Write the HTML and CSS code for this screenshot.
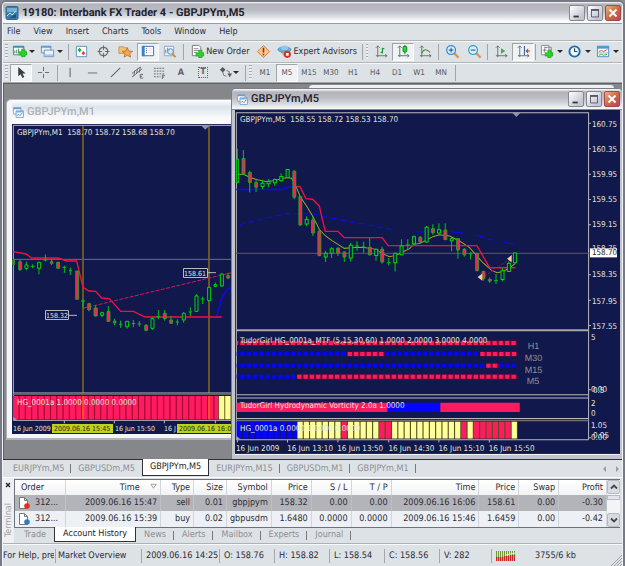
FILE: index.html
```html
<!DOCTYPE html>
<html lang="en">
<head>
<meta charset="utf-8">
<title>19180: Interbank FX Trader 4 - GBPJPYm,M5</title>
<link rel="stylesheet" href="styles.css">
</head>
<body>
<svg class="defs" aria-hidden="true">
  <symbol id="windows" viewBox="0 0 16 16"><path d="M2 2h9v8H2z" fill="#fff" stroke="#7f9cc4"/><path d="M2 2h9v2H2z" fill="#6f9bd0"/><path d="M5 6h9v8H5z" fill="#fff" stroke="#6a96c6"/><path d="M5 6h9v2H5z" fill="#79b1dd"/><path d="M6 12l2-2 2 2 2-3 1 1" fill="none" stroke="#4f86bd"/></symbol>
  <symbol id="min" viewBox="0 0 16 16"><path d="M4 11h6v2H4z" fill="#33333d"/></symbol>
  <symbol id="max" viewBox="0 0 16 16"><path d="M4 4.500h8v8H4z" fill="none" stroke="#55555f"/><path d="M3.500 3.500h9v2h-9z" fill="#55555f"/></symbol>
  <symbol id="close" viewBox="0 0 16 16"><path d="M4 4l8 8M12 4l-8 8" stroke="#fff" stroke-width="2.200" fill="none"/></symbol>
  <symbol id="plus" viewBox="0 0 8 8"><path d="M3 0h3v3h2v3H6v2H3V6H0V3h3z" fill="#2fd02a" stroke="#159a18" stroke-width=".6"/></symbol>
  <symbol id="axes" viewBox="0 0 16 16"><path d="M4 2v12M2 4l2-2 2 2M2 12.500h12M12 11l2 1.500-2 1.500" fill="none" stroke="#6c6f6a"/></symbol>
</svg>
<div class="app">
  <header class="title-bar">
    <svg class="icon" viewBox="0 0 16 16"><rect x="1" y="1.500" width="12" height="13" rx="1.500" fill="#3b7dad" stroke="#33648f"/><path d="M2 3h10v4H2z" fill="#6fb2d4"/><path d="M2 11l3-3 2 2 4-4" fill="none" stroke="#c5e3f2"/><path d="M4 13h7V9z" fill="#1c5385"/></svg>
    <h1 class="title">19180: Interbank FX Trader 4 - GBPJPYm,M5</h1>
    <div class="controls">
      <button class="control" aria-label="Minimize"><svg><use href="#min"/></svg></button>
      <button class="control" aria-label="Maximize"><svg><use href="#max"/></svg></button>
      <button class="control control-close" aria-label="Close"><svg><use href="#close"/></svg></button>
    </div>
  </header>

  <nav class="menu">
    <button>File</button><button>View</button><button>Insert</button><button>Charts</button><button>Tools</button><button>Window</button><button>Help</button>
  </nav>

  <div class="toolbar">
    <span class="grip"></span>
    <button class="tool drop" aria-label="New chart"><svg class="icon" viewBox="0 0 16 16"><path d="M1.500 2.500h11v9h-11z" fill="#f4fafc" stroke="#4b8a9c"/><path d="M1 2h12v2H1z" fill="#3f8fb0"/><path d="M3 10V7m2 3V6m2 4V5" stroke="#3d9c57"/><use href="#plus" x="7" y="5" width="9" height="9"/></svg></button>
    <button class="tool drop" aria-label="Profiles"><svg class="icon" viewBox="0 0 16 16"><path d="M1.500 2.500h10v7h-10z" fill="#e6f0f8" stroke="#5f8fc3"/><path d="M1 2h11v2H1z" fill="#5d9bd6"/><path d="M4.500 6.500h10v7h-10z" fill="#eef4fa" stroke="#6a91c2"/><path d="M5 11h9v2H5z" fill="#a9c6e2"/></svg></button>
    <span class="sep"></span>
    <button class="tool" aria-label="Market watch"><svg class="icon" viewBox="0 0 16 16"><path d="M2.500 2.500h11v11h-11z" fill="#fff" stroke="#5793bd"/><path d="M6 4l2 2.500L6 9 4 6.500z" fill="#1fa83a"/><path d="M10 7.500l2 2.300-2 2.200-2-2.200z" fill="#e0402f"/></svg></button>
    <button class="tool" aria-label="Data window"><svg class="icon" viewBox="0 0 16 16" fill="none" stroke="#666a70"><circle cx="8" cy="8" r="4.500" stroke-width="1.400"/><path d="M8 1.500v5M8 9.500v5M1.500 8h5M9.500 8h5"/></svg></button>
    <button class="tool" aria-label="Navigator"><svg class="icon" viewBox="0 0 16 16"><path d="M1 3h5l1 1h3v6H1z" fill="#f2c36f" stroke="#c1853c" stroke-width=".8"/><path d="M10 4l1.500 3.500 4 .3-3 2.400 1 3.800L10 12l-3.500 2 1-3.800-3-2.400 4-.3z" fill="#f4a650" stroke="#b9652b" stroke-width=".8"/></svg></button>
    <button class="tool pressed" aria-label="Terminal"><svg class="icon" viewBox="0 0 16 16"><path d="M2.500 2.500h12v10h-12z" fill="#fdfeff" stroke="#3d6ea8"/><path d="M2 2h3v11H2z" fill="#3a83ca"/><path d="M6.500 5h1M6.500 7h1M6.500 9h1" stroke="#556"/><path d="M9 5h4M9 7h4M9 9h4" stroke="#dfe8f2"/></svg></button>
    <button class="tool" aria-label="Strategy tester"><svg class="icon" viewBox="0 0 16 16"><path d="M2.500 2.500h10v10h-10z" fill="#eef4fa" stroke="#8ba7c8"/><path d="M4 10V6m2 3V4m2 4V5" stroke="#5d8e9b"/><circle cx="9" cy="8" r="3" fill="#cfe8f8" fill-opacity=".8" stroke="#5f87b0"/><path d="M11 10.500l3.500 3.500" stroke="#d88a35" stroke-width="2"/></svg></button>
    <span class="sep sep-wide"></span>
    <button class="tool labelled"><svg class="icon" viewBox="0 0 16 16"><path d="M2.500 1.500h7l2 2v9h-9z" fill="#fff" stroke="#777"/><path d="M4 5h5M4 7h6M4 9h3" stroke="#888"/><use href="#plus" x="6" y="6" width="9" height="9"/></svg>New Order</button>
    <button class="tool" aria-label="MetaEditor"><svg class="icon" viewBox="0 0 16 16"><path d="M8 1.500L14.500 8 8 14.500 1.500 8z" fill="#f6c48f" stroke="#cf7f3c"/><path d="M8 4v5M8 10.500v1.500" stroke="#8b2c14" stroke-width="1.600"/></svg></button>
    <button class="tool labelled"><svg class="icon" viewBox="0 0 16 16"><path d="M3 7l5 6 5-6z" fill="#f0c07c" stroke="#c08b4a" stroke-width=".7"/><ellipse cx="8" cy="6" rx="7" ry="3" fill="#63b0df" stroke="#3d83b5" stroke-width=".7"/><ellipse cx="8" cy="4" rx="4" ry="2.500" fill="#8bcaec"/><circle cx="11" cy="11" r="3.800" fill="#d92c1d"/><path d="M9.500 9.500h3v3h-3z" fill="#fff"/></svg>Expert Advisors</button>
    <span class="sep"></span><span class="grip"></span>
    <button class="tool" aria-label="Bar chart"><svg class="icon" viewBox="0 0 16 16"><use href="#axes"/><path d="M9 4v6M7 9h2M9 5h2" stroke="#18a02c" stroke-width="1.300"/></svg></button>
    <button class="tool pressed" aria-label="Candlesticks"><svg class="icon" viewBox="0 0 16 16"><use href="#axes"/><path d="M9.500 1v10" stroke="#11801d"/><rect x="7.500" y="2.500" width="4" height="6" rx="1" fill="#25dd35" stroke="#11801d"/></svg></button>
    <button class="tool" aria-label="Line chart"><svg class="icon" viewBox="0 0 16 16"><use href="#axes"/><path d="M4 10c2-5 5-5 9-1" fill="none" stroke="#4c8f4e" stroke-width="1.200"/></svg></button>
    <span class="sep"></span>
    <button class="tool" aria-label="Zoom in"><svg class="icon" viewBox="0 0 16 16"><path d="M10 10l4.500 4.500" stroke="#d89a4b" stroke-width="2.400"/><circle cx="6.500" cy="6.500" r="4.700" fill="#d7f0fc" stroke="#3b86c0" stroke-width="1.300"/><path d="M4 6.500h5M6.500 4v5" stroke="#236cab" stroke-width="1.300"/></svg></button>
    <button class="tool" aria-label="Zoom out"><svg class="icon" viewBox="0 0 16 16"><path d="M10 10l4.500 4.500" stroke="#d89a4b" stroke-width="2.400"/><circle cx="6.500" cy="6.500" r="4.700" fill="#d7f0fc" stroke="#3b9cc4" stroke-width="1.300"/><path d="M4 6.500h5" stroke="#236cab" stroke-width="1.300"/></svg></button>
    <span class="sep"></span>
    <button class="tool" aria-label="Auto scroll"><svg class="icon" viewBox="0 0 16 16"><use href="#axes"/><path d="M7.500 4.500l4.500 3-4.500 3z" fill="#35b04a"/></svg></button>
    <button class="tool pressed" aria-label="Chart shift"><svg class="icon" viewBox="0 0 16 16"><use href="#axes"/><path d="M9 2v10" stroke="#3b6fb5" stroke-width="1.300"/><path d="M10 7.500l3-3v6zM13 7h2v1h-2z" fill="#d8412c"/></svg></button>
    <span class="sep sep-thin"></span>
    <button class="tool drop" aria-label="Indicators"><svg class="icon" viewBox="0 0 16 16"><path d="M1.500 1.500h8v10h-8z" fill="#fff" stroke="#858a8f"/><path d="M7 4c-2-1-2 1-2.500 5M3 6.500h4" fill="none" stroke="#777"/><path d="M4 3.500h8v9" fill="none" stroke="#858a8f"/><use href="#plus" x="5" y="6" width="9" height="9"/></svg></button>
    <button class="tool drop" aria-label="Periods"><svg class="icon" viewBox="0 0 16 16"><circle cx="7" cy="8" r="5.500" fill="#eef8ff" stroke="#1f68b2" stroke-width="2"/><path d="M7 4.500V8h3" fill="none" stroke="#345" stroke-width="1.200"/></svg></button>
    <button class="tool drop" aria-label="Templates"><svg class="icon" viewBox="0 0 16 16"><path d="M1.500 2.500h12v11h-12z" fill="#fff" stroke="#4d8fc1"/><path d="M1 2h13v3H1z" fill="#4d9bd5"/><path d="M3 8l3-1 2 1 4-2" fill="none" stroke="#c44"/><path d="M2 9.500h11" stroke="#9ab"/><path d="M3 12l3-1 2 1 4-1" fill="none" stroke="#3a9a55"/></svg></button>
  </div>

  <div class="toolbar toolbar-lines">
    <span class="grip"></span>
    <button class="tool pressed" aria-label="Cursor"><svg class="icon" viewBox="0 0 16 16"><path d="M4.500 2v10l2.500-2.200 2 4 2-1-2-3.800h3.500z" fill="#3d3d40"/></svg></button>
    <button class="tool" aria-label="Crosshair"><svg class="icon" viewBox="0 0 16 16"><path d="M8 2v4.500M8 9.500V14M2 8h4.500M9.500 8H14" stroke="#66696d"/></svg></button>
    <span class="sep"></span>
    <button class="tool" aria-label="Vertical line"><svg class="icon" viewBox="0 0 16 16"><path d="M6.500 3v10" stroke="#55585c"/></svg></button>
    <button class="tool" aria-label="Horizontal line"><svg class="icon" viewBox="0 0 16 16"><path d="M2 8.500h10" stroke="#66696d"/></svg></button>
    <button class="tool" aria-label="Trendline"><svg class="icon" viewBox="0 0 16 16"><path d="M3 13L13 3" stroke="#66696d" stroke-width="1.200"/></svg></button>
    <button class="tool" aria-label="Equidistant channel"><svg class="icon" viewBox="0 0 16 16" fill="none" stroke="#66696d"><path d="M2 9l9-7M2 13l11-9M5 6l-1 6M8 4L7 9M11 2l-1 6"/><path d="M14 10h-3v4h3M11 12h2"/></svg></button>
    <button class="tool" aria-label="Fibonacci"><svg class="icon" viewBox="0 0 16 16" fill="none" stroke="#66696d"><path d="M2 3.500h12M2 6.500h12M2 9.500h12M2 12.500h7" stroke-dasharray="2 1"/><path d="M14 11h-3v4M11 13h2"/></svg></button>
    <button class="tool letter">A</button>
    <button class="tool letter"><span class="boxed">T</span></button>
    <button class="tool drop drop-near" aria-label="Arrows"><svg class="icon" viewBox="0 0 16 16"><path d="M5 2l3 3-3 3-3-3zM10 9h5l-2.500 4z" fill="#55585c"/><path d="M5 7l1 4 3 1M9 6l3 1v3" fill="none" stroke="#777"/></svg></button>
    <span class="sep"></span><span class="grip"></span>
    <button class="tool period">M1</button><button class="tool period pressed">M5</button><button class="tool period">M15</button><button class="tool period">M30</button><button class="tool period">H1</button><button class="tool period">H4</button><button class="tool period">D1</button><button class="tool period">W1</button><button class="tool period">MN</button>
    <span class="sep"></span>
  </div>

  <main class="workspace">
    <div class="back-window"></div>

    <section class="window window-m1">
      <div class="window-title"><svg class="icon"><use href="#windows"/></svg><h2 class="title">GBPJPYm,M1</h2></div>
      <svg class="chart" viewBox="12 124 220 310" preserveAspectRatio="xMinYMin slice" role="img" aria-label="GBPJPYm one minute chart">
        <rect x="12" y="124" width="220" height="310" fill="#10184c"/>
        <g transform="translate(0 95) scale(.333333)" fill="none" stroke-width="3">
          <path d="M40 976V91H699" stroke="#b9b9bd"/>
          <path d="M40 493H699" stroke="#6d7280"/>
          <path d="M249 93V894M627 93V894" stroke="#7b611c" stroke-width="5"/>
          <path d="M604 92h24l-12 12z" fill="#8a94a4"/>
          <path d="M40 470L78 477 95 489H175L200 498H230L240 540 249 577 267 588 287 589 305 609 328 611 362 649H400L436 666H665" stroke="#f5103c" stroke-width="4"/>
          <path d="M249 640L699 532" stroke="#c81e50" stroke-dasharray="12 4"/>
          <path d="M650 663L665 610 684 580 699 577" stroke="#0a0aff" stroke-width="4"/>
          <path class="wick" d="M41 492v18M60 495v33M79 500v26M98 508v12M92 514h12M117 500v38M136 478v22M130 495h12M155 492v18M174 500v22M193 512v22M187 517h12M211 518v22M207 527h9M249 613v27M243 618h12M267 623v26M287 631v34M306 650v17M325 633v48M344 671v20M362 677v22M357 688h10M381 678v23M400 675v22M395 686h10M418 678v17M413 687h10M438 687v22M457 668v37M475 645v28M469 665h12M494 645v32M513 663v24M532 673v18M527 681h10M551 651v32M571 637v26M566 651h10M589 597v54M608 605v22M602 612h12M627 575v44M646 563v14M665 535v40M684 533v20"/>
          <path class="down" d="M38 496h6v12h-6zM56 500h9v24h-9zM151 500h8v5h-8zM170 502h9v18h-9zM227 528h9v85h-9zM263 626h9v18h-9zM282 639h10v24h-10zM321 649h9v30h-9zM340 678h8v6h-8zM434 691h9v15h-9zM490 655h9v16h-9zM509 675h9v10h-9zM680 542h9v7h-9z"/>
          <path class="up" d="M75 510h9v10h-9zM113 502h9v18h-9zM302 653h9v8h-9zM377 679h9v16h-9zM453 671h9v29h-9zM547 655h9v20h-9zM585 603h9v46h-9zM623 577h9v40h-9zM642 569h8v5h-8zM661 537h9v36h-9z"/>
          <path d="M207 661h24M624 533h24" stroke="#b9b9bd"/>
          <path d="M40 894H699" stroke="#b9b9bd"/><path d="M40 898H699" stroke="#5d6068" stroke-width="4"/>
          <path d="M40 938H655" stroke="#9c0a2c" stroke-width="70"/>
          <path d="M655 938H699" stroke="#77701c" stroke-width="70"/>
          <path d="M40 938H655" stroke="#ff1b60" stroke-width="70" stroke-dasharray="15.500 3.360"/>
          <path d="M657 938H699" stroke="#ffff9c" stroke-width="70" stroke-dasharray="15.500 3.360"/>
          <path d="M249 903v70M627 903v70" stroke="#ff5a22" stroke-width="5"/>
          <path d="M40 976H699M193 976v9M343 976v9M493 976v9M646 976v9" stroke="#b9b9bd"/>
          <path d="M40 966l12 10H40z" fill="#9aa0aa"/>
        </g>
        <path d="M52 424h61v9H52zM177 424h60v9H177z" fill="#bfd31a"/>
        <path d="M45.500 310.500h23v9h-23zM183.500 268.500h24v9h-24z" fill="#10184c" stroke="#b9b9bd"/>
        <g class="plot-text">
          <text x="17" y="135">GBPJPYm,M1&#160; 158.70 158.72 158.68 158.70</text>
          <text x="17" y="405">HG_0001a 1.0000 0.0000 0.0000</text>
        </g>
        <g class="plot-text axis-text">
          <text x="46" y="318">158.32</text><text x="184" y="276">158.61</text>
          <text x="13" y="431">16 Jun 2009</text><text x="115" y="431">16 Jun 15:50</text><text x="164" y="431">16 J</text>
          <g class="marked"><text x="54" y="431">2009.06.16 15:45</text><text x="179" y="431">2009.06.16 16:05</text></g>
        </g>
      </svg>
    </section>

    <section class="window window-m5">
      <div class="window-title"><svg class="icon"><use href="#windows"/></svg><h2 class="title">GBPJPYm,M5</h2>
        <div class="controls">
          <button class="control" aria-label="Minimize chart"><svg><use href="#min"/></svg></button>
          <button class="control" aria-label="Maximize chart"><svg><use href="#max"/></svg></button>
          <button class="control control-close" aria-label="Close chart"><svg><use href="#close"/></svg></button>
        </div>
      </div>
      <svg class="chart" viewBox="236 111 384 343" preserveAspectRatio="xMinYMin slice" role="img" aria-label="GBPJPYm five minute chart">
        <rect x="236" y="111" width="384" height="343" fill="#10184c"/>
        <g transform="translate(230 110) scale(.333333)" fill="none" stroke-width="3">
          <path d="M22 990V11H1076V990" stroke="#b9b9bd"/>
          <path d="M22 432H1076" stroke="#4d533e" stroke-width="4"/>
          <path d="M848 12h24l-12 12z" fill="#8a94a4"/>
          <path d="M22 241H158L180 233H200" stroke="#0a0aff" stroke-width="4"/>
          <path d="M32 346L170 313 255 314 300 325 350 335 400 344 490 361" stroke="#0a0aff" stroke-dasharray="16 12"/>
          <path d="M562 368L605 367M665 367L705 372M735 377L760 383M775 389L790 393M820 399L852 404" stroke="#0a0aff"/>
          <path d="M22 195L45 196 62 204 85 212 110 217 135 215 160 208 175 205 187 207 200 230 213 262 232 290 251 322 270 360 289 380 307 393 326 405 345 417 364 415 400 414 440 420 458 432 480 442 500 438 520 428 540 418 553 405 572 402 591 392 610 382 630 376 660 380 690 395 720 415 742 440 760 460 785 482 802 490 820 486 840 475 857 462" stroke="#a3a02c"/>
          <path d="M203 232H212L230 268 250 270 270 290 288 366H326L345 385H458L476 409H742L780 475H857" stroke="#f5103c" stroke-width="4"/>
          <path d="M765 500L842 448" stroke="#8c1034" stroke-dasharray="8 4"/>
          <path class="wick" d="M25 118v104M43 123v73M62 185v65M81 212v36M100 212v28M118 210v24M137 208v22M156 192v26M175 180v26M195 183v87M213 260v90M232 322v28M251 322v58M270 358v82M289 424v34M307 414v32M326 415v25M345 426v32M364 400v56M383 396v28M377 410h12M403 397v33M398 413h10M421 386v51M440 418v36M458 412v50M478 446v22M472 460h12M497 430v56M516 390v46M535 390v30M529 407h12M553 378v30M572 380v24M591 350v50M610 345v31M628 342v34M647 342v50M666 384v42M685 386v62M704 416v26M723 428v22M718 433h10M742 430v54M761 484v30M780 504v16M799 494v30M793 514h12M818 476v40M837 456v30M855 430v32"/>
          <path class="down" d="M39 148h9v48h-9zM58 190h9v30h-9zM77 220h9v14h-9zM191 186h9v78h-9zM209 262h9v85h-9zM247 332h9v39h-9zM266 366h9v73h-9zM322 416h9v15h-9zM341 428h9v15h-9zM417 414h9v23h-9zM454 420h9v38h-9zM568 384h9v14h-9zM606 358h9v12h-9zM643 362h9v29h-9zM681 388h9v34h-9zM700 420h9v16h-9zM738 432h9v52h-9zM757 486h9v22h-9zM776 510h9v5h-9z"/>
          <path class="up" d="M22 150h6v70h-6zM96 222h9v10h-9zM114 217h9v7h-9zM133 211h9v10h-9zM152 202h9v13h-9zM171 181h9v25h-9zM228 331h9v13h-9zM285 432h9v11h-9zM303 418h9v14h-9zM360 408h9v38h-9zM436 420h9v18h-9zM493 432h9v28h-9zM512 410h9v26h-9zM549 382h9v21h-9zM587 354h9v44h-9zM624 361h9v10h-9zM662 388h9v6h-9zM814 484h9v26h-9zM833 462h9v24h-9zM851 431h9v29h-9z"/>
          <path d="M758 492v22l-14-11zM846 437v22l-14-11z" fill="#f3c9ac"/>
          <path d="M22 662H1076" stroke="#a7a79f" stroke-width="6"/>
          <path d="M22 855H1076M22 865H1076M22 926H1076" stroke="#b9b9bd"/>
          <path d="M22 932H1076" stroke="#70706f" stroke-width="5"/>
          <g stroke-width="15"><path d="M34 700H862M355 733H466M752 733H862M770 768H808M204 801H862" stroke="#6a0a34"/></g>
          <g stroke-width="12" stroke-dasharray="13 5.860">
            <path d="M34 700H862M204 801H862M355 733H466M752 733H862M770 768H808" stroke="#ff1b60"/>
            <path d="M34 733H350M467 733H750M34 768H769M808 768H862M34 801H200" stroke="#0404ff"/>
          </g>
          <path d="M23 700h5" stroke="#ff1b60" stroke-width="12"/><path d="M23 733h5M23 768h5M23 801h5" stroke="#0404ff" stroke-width="12"/>
          <path d="M23 893H474M632 893H870" stroke="#ff1b60" stroke-width="28"/><path d="M474 893H632" stroke="#0404ff" stroke-width="28"/>
          <path d="M204 961H864" stroke="#55501e" stroke-width="50"/>
          <g stroke-width="50" stroke-dasharray="15.500 3.360">
            <path d="M23 961H204" stroke="#0404ff"/>
            <path d="M205 961H337M356 961H450M488 961H695M714 961H733M846 961H864" stroke="#ffff9c"/>
            <path d="M337 961H356M450 961H487M695 961H714M733 961H846" stroke="#ff1b60"/>
          </g>
          <path d="M22 990H1076M25 990v8M175 990v8M326 990v8M478 990v8M628 990v8M779 990v8M1076 43h7M1076 119h7M1076 195h7M1076 271h7M1076 346h7M1076 496h7M1076 572h7M1076 648h7M1076 840h7M1076 984h7" stroke="#b9b9bd"/>
          <path d="M22 978l14 12H22z" fill="#9aa0aa"/>
        </g>
        <g class="plot-text">
          <text x="241" y="123">GBPJPYm,M5&#160; 158.55 158.72 158.53 158.70</text>
          <text x="592" y="128">160.75</text><text x="592" y="153">160.35</text><text x="592" y="178">159.95</text><text x="592" y="203">159.55</text><text x="592" y="228">159.15</text><text x="592" y="252">158.75</text><text x="592" y="278">158.35</text><text x="592" y="304">157.95</text><text x="592" y="329">157.55</text>
          <rect x="590" y="249" width="27" height="9" fill="#fff"/><text class="marked" x="592" y="256">158.70</text>
          <text x="241" y="343">TudorGirl HG_0001a_MTF (5,15,30,60) 1.0000 2.0000 3.0000 4.0000</text>
          <text x="241" y="408">TudorGirl Hydrodynamic Vorticity 2.0a 1.0000</text>
          <text x="241" y="431">HG_0001a 0.0000 1.0000 0.0000</text>
          <text x="591" y="340">5</text><text x="591" y="392">0.00</text><text x="593" y="393">0.5</text><text x="591" y="406">2</text><text x="591" y="416">0</text><text x="591" y="428">1.05</text><text x="591" y="440">0.00</text><text x="593" y="438">0.05</text>
          <text x="237" y="451">16 Jun 2009</text><text x="288" y="451">16 Jun 13:10</text><text x="338" y="451">16 Jun 13:50</text><text x="389" y="451">16 Jun 14:30</text><text x="439" y="451">16 Jun 15:10</text><text x="489" y="451">16 Jun 15:50</text>
        </g>
        <g class="frame-text"><text x="528" y="349">H1</text><text x="525" y="361">M30</text><text x="525" y="373">M15</text><text x="527" y="384">M5</text></g>
      </svg>
    </section>
  </main>

  <nav class="chart-tabs">
    <button>EURJPYm,M5</button><button class="before-active">GBPUSDm,M5</button><button class="active">GBPJPYm,M5</button><button>EURJPYm,M15</button><button>GBPUSDm,M1</button><button>GBPJPYm,M1</button>
    <svg class="tab-arrows" viewBox="0 0 24 8"><path d="M10 1v6L7 4zM20 1v6l3-3z" fill="#999ca3"/></svg>
  </nav>

  <section class="terminal">
    <div class="terminal-side"><button class="terminal-close" aria-label="Close terminal"><svg viewBox="0 0 6 6"><path d="M1 1l4 4M5 1L1 5" stroke="#222" stroke-width="1.400"/></svg></button><span class="terminal-name">Terminal</span></div>
    <div class="terminal-main">
      <div class="history">
        <table>
          <colgroup><col class="c-order"><col class="c-time"><col class="c-type"><col class="c-type"><col class="c-price"><col class="c-price"><col class="c-price"><col class="c-price"><col class="c-close"><col class="c-price"><col class="c-price"><col class="c-profit"></colgroup>
          <thead><tr><th class="first">Order</th><th class="sorted">Time <svg viewBox="0 0 8 8"><path d="M1 1.500h6L4 6z" fill="none" stroke="#999"/></svg></th><th>Type</th><th>Size</th><th>Symbol</th><th>Price</th><th>S / L</th><th>T / P</th><th>Time</th><th>Price</th><th>Swap</th><th>Profit</th></tr></thead>
          <tbody>
            <tr class="selected"><td class="first"><svg viewBox="0 0 12 12"><path d="M1.500.5h5l3 3v8h-8z" fill="#fff" stroke="#777"/><path d="M6.500.5v3h3" fill="none" stroke="#777"/><circle cx="9" cy="9" r="2.800" fill="#e0301c"/></svg>312...</td><td>2009.06.16 15:47</td><td>sell</td><td>0.01</td><td>gbpjpym</td><td>158.32</td><td>0.00</td><td>0.00</td><td>2009.06.16 16:06</td><td>158.61</td><td>0.00</td><td>-0.30</td></tr>
            <tr><td class="first"><svg viewBox="0 0 12 12"><path d="M1.500.5h5l3 3v8h-8z" fill="#fff" stroke="#777"/><path d="M6.500.5v3h3" fill="none" stroke="#777"/><circle cx="9" cy="9" r="2.800" fill="#2d7cc4"/></svg>312...</td><td>2009.06.16 15:39</td><td>buy</td><td>0.02</td><td>gbpusdm</td><td>1.6480</td><td>0.0000</td><td>0.0000</td><td>2009.06.16 15:46</td><td>1.6459</td><td>0.00</td><td>-0.42</td></tr>
          </tbody>
        </table>
        <div class="scrollbar"><button aria-label="Scroll up"><svg viewBox="0 0 8 8"><path d="M1 5.500l3-3 3 3" fill="none" stroke="#44464c" stroke-width="1.800"/></svg></button><span class="thumb"></span><button aria-label="Scroll down"><svg viewBox="0 0 8 8"><path d="M1 2.500l3 3 3-3" fill="none" stroke="#44464c" stroke-width="1.800"/></svg></button></div>
      </div>
      <nav class="terminal-tabs"><button class="before-active">Trade</button><button class="active">Account History</button><button>News</button><button>Alerts</button><button>Mailbox</button><button>Experts</button><button>Journal</button></nav>
    </div>
  </section>

  <footer class="status">
    <span class="s-help">For Help, pre</span><span class="s-profile">Market Overview</span><span class="s-time">2009.06.16 14:25</span><span>O: 158.76</span><span>H: 158.82</span><span>L: 158.54</span><span>C: 158.56</span><span class="s-volume">V: 282</span>
    <span class="s-net"><svg viewBox="0 0 19 10"><path d="M0 5h19" stroke="#6f9a3c" stroke-width="10" stroke-dasharray="1 1"/><path d="M.5 10V6M2.500 10V6M4.500 10V6M6.500 10V6M8.500 10V5M10.500 10V5M12.500 10V5M14.500 10V4M16.500 10V4M18.500 10V4" stroke="#c6282c" stroke-width="1.400"/><path d="M10 4L19 2" stroke="#e5e8d8"/></svg>3755/6 kb</span>
    <svg class="resize" viewBox="0 0 12 12"><path d="M1 12L12 1M4 12l8-8M7 12l5-5M10 12l2-2" stroke="#9fa3aa"/></svg>
  </footer>
</div>
</body>
</html>
```
FILE: styles.css
```css
* { box-sizing: border-box; }
body { margin: 0; background: #8b8e97; text-rendering: geometricPrecision; }
button { margin: 0; padding: 0; border: 0; background: none; color: inherit; font: inherit; white-space: nowrap; text-rendering: inherit; }
h1, h2 { margin: 0; }
svg { display: block; flex: none; }
.defs { position: absolute; width: 0; height: 0; }
.icon { width: 16px; height: 16px; }

.app {
  display: flex; flex-direction: column; min-height: 100vh;
  border: 1px solid #777a84; border-width: 2px 2px 1px 2px; border-radius: 6px 6px 0 0;
  box-shadow: inset 1px 0 #f2f4f8, inset -1px 0 #f2f4f8;
  padding: 0 1px; background: #dde2e7; color: #2c2c34;
  font: 9px/12px "DejaVu Sans Condensed", "DejaVu Sans", sans-serif;
}

.title-bar { display: flex; align-items: center; height: 22px; padding: 0 1px 0 2px; border-radius: 4px 4px 0 0; border-bottom: 1px solid #9a9ca4; background: linear-gradient(#fff 0, #b2b3bb 2px, #b9bac2 8px, #d5dae1 14px, #fbfbfb 19px); }
.title { flex: 1; margin-left: 1px; color: #22222c; font: 700 11px/16px Roboto, "Open Sans", sans-serif; white-space: nowrap; }
.controls { display: flex; gap: 2px; }
.control { width: 16px; height: 16px; border: 1px solid #868894; border-radius: 2px; background: linear-gradient(135deg, #fff, #c3c5d2 80%); }
.control svg { width: 14px; height: 14px; }
.control-close { border-color: #a5484b; background: linear-gradient(135deg, #f0b183, #cc6d42 50%, #bd405a); }

.menu { display: flex; height: 16px; padding: 0 4px; align-items: center; gap: 13px; }

.toolbar { display: flex; align-items: center; height: 22px; padding: 0 1px; border-top: 1px solid #b3b5b5; box-shadow: inset 0 1px #f6f7f8; }
.toolbar-lines { height: 21px; border-bottom: 1px solid #a4a6a8; }
.grip { width: 3px; height: 15px; margin: 0 2px 0 1px; background: repeating-linear-gradient(#a7aaae 0 1px, #eceef0 1px 3px); }
.sep { width: 6px; height: 16px; background: linear-gradient(#a1a4a8, #a1a4a8) center / 1px 100% no-repeat; }
.sep-wide { width: 8px; }
.sep-thin { width: 3px; }
.tool { display: flex; align-items: center; justify-content: center; width: 22px; height: 18px; flex: none; }
.tool .icon { width: 15px; height: 15px; }
.drop { width: 28px; gap: 2px; }
.drop-near { gap: 0; }
.drop::after { content: ""; border: 3px solid transparent; border-top-color: #26262b; border-bottom: 0; }
.labelled { width: auto; padding: 0 3px; gap: 1px; }
.pressed { border: 1px solid #a1a4a9; border-right-color: #fff; border-bottom-color: #fff; background: #f0f3f6; }
.letter { font-weight: bold; color: #606368; }
.boxed { width: 10px; height: 11px; border: 1px dotted #606368; line-height: 9px; }
.period { color: #565961; font-size: 8px; }

.workspace { position: relative; flex: 1; min-height: 376px; overflow: hidden; border: solid #5f626a; border-width: 1px 0 0 1px; background: #85878b; }
.window { position: absolute; display: flex; flex-direction: column; border-radius: 5px 5px 0 0; }
.window-title { display: flex; align-items: center; height: 21px; flex: none; }
.window-title .icon { width: 13px; height: 13px; }
.window-title .title { margin-left: 2px; font-weight: 500; }
.window-m1 { left: 2px; top: 15px; width: 232px; padding: 0 5px; border: 1px solid #b0b3b8; border-bottom-width: 2px; background: #f5f6f7; }
.window-m1 .window-title { height: 24px; background: linear-gradient(#fff, #dbe4eb 7px, #fafafa 18px); }
.window-m1 .window-title .title { color: #afb1b4; }
.window .chart { width: 100%; }
.window-m1::after { content: ""; height: 4px; }
.window-m5 { left: 227px; right: -1px; top: 4px; padding: 0 2px 0 3px; border: 1px solid #7c7e88; background: #c3c5ce; }
.window-m5 .window-title { margin: 0 -2px 0 -3px; padding: 0 2px 0 4px; border-radius: 4px 4px 0 0; border-bottom: 1px solid #85878f; background: linear-gradient(#fff 0, #b3b4bc 3px, #bbbcc4 9px, #d8dce2 15px, #fafafa 20px); }
.window-m5::after { content: ""; height: 4px; border-top: 1px solid #f1f2f6; border-bottom: 1px solid #f1f2f6; }
.back-window { position: absolute; left: 305px; right: 8px; top: 0; height: 6px; border-top: 1px solid #8a8c94; border-radius: 4px 4px 0 0; background: #eef0f2; }

.wick { stroke: #00c80a; }
.down { fill: #ff1b60; stroke: #12b81a; stroke-width: 2.400; }
.up { fill: #10184c; stroke: #00d80a; }
.plot-text { fill: #e4e4da; font: 8px "DejaVu Sans Condensed", "DejaVu Sans", sans-serif; }
.axis-text { font-size: 7px; }
.marked { fill: #26280a; }
.frame-text { fill: #938f8e; font: 9px "Liberation Sans", sans-serif; }

.chart-tabs { display: flex; height: 18px; padding: 1px 2px 0 3px; border-top: 1px solid #303036; color: #8c8e92; }
.chart-tabs button { position: relative; height: 15px; padding: 0 7px; }
.chart-tabs .active { margin-top: -2px; height: 17px; border: 1px solid #303036; border-top: 0; background: #fff; color: #1c1c20; }
.chart-tabs button:not(.active):not(.before-active)::after, .terminal-tabs button:not(.active):not(.before-active)::after { content: ""; position: absolute; right: 0; top: 3px; height: 9px; border-right: 1px solid #77797d; }
.tab-arrows { width: 24px; height: 8px; margin: 4px 0 0 auto; }

.terminal { display: flex; height: 66px; border-top: 1px solid #fff; }
.terminal-side { display: flex; flex-direction: column; align-items: center; width: 11px; padding-top: 3px; gap: 15px; background: #eef0f3; }
.terminal-close { width: 7px; height: 7px; }
.terminal-close svg { width: 6px; height: 6px; }
.terminal-name { writing-mode: vertical-rl; transform: rotate(180deg); color: #a3a5a9; line-height: 10px; }
.terminal-main { flex: 1; min-width: 0; padding-right: 2px; }
.history { display: flex; margin-top: 1px; height: 49px; border: 1px solid #6f727a; border-right: 0; background: #fff; }
table { flex: 1; min-width: 0; table-layout: fixed; border-collapse: collapse; }
.c-order { width: 51px; } .c-time { width: 95px; } .c-type { width: 33px; } .c-price { width: 40px; } .c-close { width: 88px; } .c-profit { width: 48px; }
th, td { height: 16px; padding: 0 3px; border-right: 1px solid #d2d5d9; text-align: right; font-weight: normal; white-space: nowrap; }
th { height: 15px; background: linear-gradient(#fff, #f1f2f4); }
th.first { text-align: left; padding-left: 6px; }
td.first { text-align: left; }
td svg { display: inline-block; width: 12px; height: 12px; margin-right: 5px; vertical-align: middle; }
th svg { display: inline-block; width: 7px; height: 7px; margin-left: 8px; }
td { background: #edf0f4; }
.selected td { background: #b3b4ba; border-right-color: #bfc0c4; }
.scrollbar { display: flex; flex-direction: column; justify-content: space-between; width: 13px; background: #f2f4f6; }
.scrollbar button { display: grid; place-items: center; height: 14px; border: 1px solid #b8bac2; border-radius: 2px; background: #d8dbe2; }
.scrollbar svg { width: 8px; height: 8px; }
.thumb { height: 5px; margin-bottom: 12px; border: 1px solid #b8bac2; background: #e3e5ea; }
.terminal-tabs { display: flex; padding-left: 2px; color: #8c8e92; }
.terminal-tabs button { position: relative; height: 14px; padding: 0 8px; }
.terminal-tabs .active { margin-top: -1px; height: 15px; border: 1px solid #303036; border-top: 0; background: #fff; color: #1c1c20; }

.status { display: flex; align-items: center; height: 22px; margin-top: 1px; border-top: 1px solid #f8f9fa; box-shadow: 0 -1px #aeb1b5; }
.status span { width: 55px; height: 14px; padding-left: 4px; border-left: 1px solid #a4a7ab; line-height: 14px; overflow: hidden; white-space: nowrap; flex: none; }
.status .s-help { width: 51px; padding-left: 0; border-left: 0; margin-right: 1px; }
.status .s-profile { width: 86px; padding-left: 2px; }
.status .s-time { width: 78px; }
.status .s-volume { width: 52px; }
.status .s-net { display: flex; flex: 1; align-items: center; gap: 20px; }
.s-net svg { width: 19px; height: 10px; }
.resize { width: 12px; height: 12px; align-self: flex-end; }
```
